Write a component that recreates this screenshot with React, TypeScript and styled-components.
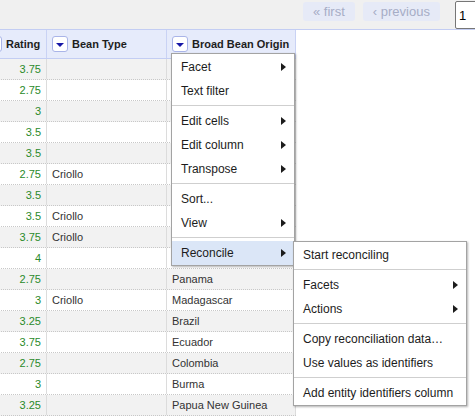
import React from "react";
import styled, { createGlobalStyle } from "styled-components";

const GlobalStyle = createGlobalStyle`
  *, *::before, *::after { box-sizing: border-box; }
  html, body { margin: 0; padding: 0; background: #ffffff; }
  body { font-family: "Liberation Sans", Arial, sans-serif; color: #222; }
`;

const Page = styled.div`
  position: relative;
  width: 475px;
  height: 417px;
  overflow: hidden;
  background: #fff;
`;

const TopBar = styled.div`
  display: flex;
  align-items: flex-start;
  gap: 8px;
  height: 30px;
  padding: 2px 0 0 303px;
  background: #f0f0f0;
  border-bottom: 1px solid #c3cdf3;
  overflow: hidden;
  white-space: nowrap;
`;

const PagerButton = styled.span`
  flex: 0 0 auto;
  height: 19px;
  line-height: 19px;
  padding: 0 10px;
  border-radius: 3px;
  background: #e6eaf7;
  color: #a6adc6;
  font-size: 13px;
`;

const PageInput = styled.input`
  flex: 0 0 auto;
  margin: -1px 0 0 7px;
  width: 40px;
  height: 28px;
  padding: 0 3px;
  border: 1px solid #767676;
  border-radius: 2px;
  background: #fff;
  font-family: "Liberation Sans", Arial, sans-serif;
  font-size: 13px;
  color: #000;
`;

const Viewport = styled.div`
  overflow: hidden;
`;

const Table = styled.div`
  margin-left: -19px;
  width: 315px;
`;

const columns = "66px 120px 129px";

const HeaderRow = styled.div`
  display: grid;
  grid-template-columns: ${columns};
  height: 29px;
  background: #e6ebfb;
  border-bottom: 1px solid #c3cdf3;
`;

const HeaderCell = styled.div`
  display: flex;
  align-items: center;
  gap: 4px;
  padding-left: 5px;
  border-right: 1px solid #c9d2f4;
  font-size: 11px;
  font-weight: bold;
  color: #1e1e1e;
  white-space: nowrap;
  overflow: hidden;
`;

const DropButton = styled.span`
  flex: 0 0 16px;
  display: flex;
  align-items: center;
  justify-content: center;
  width: 16px;
  height: 16px;
  background: #fff;
  border: 1px solid #a9b4e8;
  border-radius: 3px;
  &::after {
    content: "";
    margin-top: 2px;
    border-left: 4px solid transparent;
    border-right: 4px solid transparent;
    border-top: 4px solid #1717a6;
  }
`;

const Row = styled.div<{ $odd: boolean }>`
  display: grid;
  grid-template-columns: ${columns};
  height: 21px;
  background: ${(p) => (p.$odd ? "#f2f2f2" : "#ffffff")};
  border-bottom: 1px dotted #c8c8c8;
`;

const Cell = styled.div<{ $numeric?: boolean }>`
  padding: 0 5px;
  line-height: 20px;
  font-size: 11px;
  text-align: ${(p) => (p.$numeric ? "right" : "left")};
  color: ${(p) => (p.$numeric ? "#2a8a2a" : "#333")};
  border-right: 1px solid #dcdcdc;
  white-space: nowrap;
  overflow: hidden;
`;

const Menu = styled.div<{ $left: number; $top: number; $width: number }>`
  position: absolute;
  left: ${(p) => p.$left}px;
  top: ${(p) => p.$top}px;
  width: ${(p) => p.$width}px;
  padding-top: 1px;
  background: #fff;
  border: 1px solid #a3a3a3;
  box-shadow: 1px 1px 2px rgba(0, 0, 0, 0.3);
  z-index: 2;
`;

const MenuItem = styled.div<{ $active?: boolean }>`
  display: flex;
  align-items: center;
  justify-content: space-between;
  height: 24px;
  padding: 0 8px 0 9px;
  font-size: 12px;
  color: #1c1c1c;
  white-space: nowrap;
  background: ${(p) => (p.$active ? "#dbe6f7" : "transparent")};
`;

const Arrow = styled.span`
  width: 0;
  height: 0;
  border-top: 4px solid transparent;
  border-bottom: 4px solid transparent;
  border-left: 5px solid #1c1c1c;
`;

const Separator = styled.div`
  height: 1px;
  margin: 2px 0 3px;
  background: #cfcfcf;
`;

type RowData = [string, string, string];

// Origin cells of the first ten rows lie under the open column menu.
const rows: RowData[] = [
  ["3.75", "", ""],
  ["2.75", "", ""],
  ["3", "", ""],
  ["3.5", "", ""],
  ["3.5", "", ""],
  ["2.75", "Criollo", ""],
  ["3.5", "", ""],
  ["3.5", "Criollo", ""],
  ["3.75", "Criollo", ""],
  ["4", "", ""],
  ["2.75", "", "Panama"],
  ["3", "Criollo", "Madagascar"],
  ["3.25", "", "Brazil"],
  ["3.75", "", "Ecuador"],
  ["2.75", "", "Colombia"],
  ["3", "", "Burma"],
  ["3.25", "", "Papua New Guinea"],
];

type Entry = { label: string; sub?: boolean; active?: boolean } | "sep";

const columnMenu: Entry[] = [
  { label: "Facet", sub: true },
  { label: "Text filter" },
  "sep",
  { label: "Edit cells", sub: true },
  { label: "Edit column", sub: true },
  { label: "Transpose", sub: true },
  "sep",
  { label: "Sort..." },
  { label: "View", sub: true },
  "sep",
  { label: "Reconcile", sub: true, active: true },
];

const reconcileMenu: Entry[] = [
  { label: "Start reconciling" },
  "sep",
  { label: "Facets", sub: true },
  { label: "Actions", sub: true },
  "sep",
  { label: "Copy reconciliation data\u2026" },
  { label: "Use values as identifiers" },
  "sep",
  { label: "Add entity identifiers column" },
];

const MenuEntries: React.FC<{ entries: Entry[] }> = ({ entries }) => (
  <>
    {entries.map((e, i) =>
      e === "sep" ? (
        <Separator key={i} />
      ) : (
        <MenuItem key={i} $active={e.active}>
          <span>{e.label}</span>
          {e.sub && <Arrow />}
        </MenuItem>
      )
    )}
  </>
);

export default function App() {
  return (
    <Page>
      <GlobalStyle />
      <TopBar>
        <PagerButton>« first</PagerButton>
        <PagerButton>‹ previous</PagerButton>
        <PageInput defaultValue="1" />
      </TopBar>
      <Viewport>
        <Table>
          <HeaderRow>
            <HeaderCell>
              <DropButton />
              Rating
            </HeaderCell>
            <HeaderCell>
              <DropButton />
              Bean Type
            </HeaderCell>
            <HeaderCell>
              <DropButton />
              Broad Bean Origin
            </HeaderCell>
          </HeaderRow>
          {rows.map((r, i) => (
            <Row key={i} $odd={i % 2 === 0}>
              <Cell $numeric>{r[0]}</Cell>
              <Cell>{r[1]}</Cell>
              <Cell>{r[2]}</Cell>
            </Row>
          ))}
        </Table>
      </Viewport>
      <Menu $left={171} $top={53} $width={124}>
        <MenuEntries entries={columnMenu} />
        <Menu $left={121} $top={187} $width={174}>
          <MenuEntries entries={reconcileMenu} />
        </Menu>
      </Menu>
    </Page>
  );
}
